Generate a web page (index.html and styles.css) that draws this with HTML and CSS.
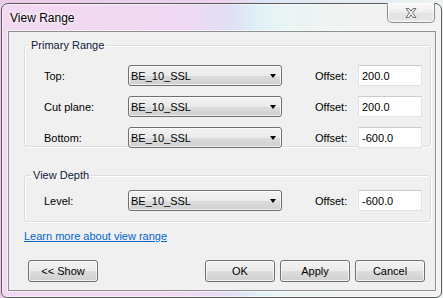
FILE: index.html
```html
<!DOCTYPE html>
<html lang="en">
<head>
    <meta charset="UTF-8">
    <meta name="viewport" content="width=device-width, initial-scale=1.0">
    <title>View Range</title>
    <link rel="stylesheet" href="styles.css">
</head>
<body>
    <div class="window">
        <div class="titlebar">
            <span class="title">View Range</span>
            <button class="close" title="Close">
                <svg width="12" height="10" viewBox="0 0 12 10">
                    <polygon points="1,0.5 4,0.5 6,3.2 8,0.5 11,0.5 7.6,5 11,9.5 8,9.5 6,6.8 4,9.5 1,9.5 4.4,5" fill="#f4f4f4" stroke="#707070" stroke-width="1" stroke-linejoin="round"/>
                </svg>
            </button>
        </div>

        <div class="client">
            <fieldset class="group primary">
                <legend>Primary Range</legend>
                <div class="rows">
                    <label>Top:</label>
                    <div class="combo"><span>BE_10_SSL</span><i class="arrow"></i></div>
                    <span></span>
                    <label>Offset:</label>
                    <input type="text" value="200.0">

                    <label>Cut plane:</label>
                    <div class="combo"><span>BE_10_SSL</span><i class="arrow"></i></div>
                    <span></span>
                    <label>Offset:</label>
                    <input type="text" value="200.0">

                    <label>Bottom:</label>
                    <div class="combo"><span>BE_10_SSL</span><i class="arrow"></i></div>
                    <span></span>
                    <label>Offset:</label>
                    <input type="text" value="-600.0">
                </div>
            </fieldset>

            <fieldset class="group depth">
                <legend>View Depth</legend>
                <div class="rows">
                    <label>Level:</label>
                    <div class="combo"><span>BE_10_SSL</span><i class="arrow"></i></div>
                    <span></span>
                    <label>Offset:</label>
                    <input type="text" value="-600.0">
                </div>
            </fieldset>

            <a class="help-link" href="#">Learn more about view range</a>

            <div class="actions">
                <button class="btn">&lt;&lt; Show</button>
                <div class="spacer"></div>
                <button class="btn">OK</button>
                <button class="btn">Apply</button>
                <button class="btn">Cancel</button>
            </div>
        </div>
    </div>
</body>
</html>
```

FILE: styles.css
```css
* {
    box-sizing: border-box;
}
body {
    margin: 0;
    width: 443px;
    height: 298px;
    overflow: hidden;
    font-family: "Liberation Sans", Arial, sans-serif;
    font-size: 11px;
    color: #000;
    background: linear-gradient(to right, #e9cbe8 0%, #ecd2ec 50%, #dde6f3 60%, #eef2f2 100%);
}
.window {
    margin: 3px 0 0 1px;
    width: 441px;
    height: 295px;
    border: 1px solid #5a5a5a;
    border-radius: 7px 7px 6px 6px;
    background: linear-gradient(to right, #f3d8f1 0%, #f0d9f3 42%, #e0def6 52%, #dff0f6 58%, #e9f5f4 64%, #f1f2f2 78%, #f2f2f2 100%);
    box-shadow: inset 0 0 0 1px rgba(255, 255, 255, 0.55);
}
.titlebar {
    display: flex;
    align-items: flex-start;
    height: 27px;
}
.title {
    margin: 7px 0 0 8px;
    font-size: 12px;
    color: #000;
    text-shadow: 0 0 6px #fff, 0 0 3px #fff;
}
.close {
    margin: -1px 6px 0 auto;
    width: 48px;
    height: 20px;
    padding: 0;
    border: 1px solid #8c8c8c;
    border-top: none;
    border-radius: 0 0 5px 5px;
    background: linear-gradient(#fbfbfb, #ececec 50%, #e2e2e2 51%, #e8e8e8);
    box-shadow: inset 0 0 0 1px rgba(255, 255, 255, 0.8);
    display: flex;
    align-items: center;
    justify-content: center;
}
.client {
    margin-left: 6px;
    width: 428px;
    height: 260px;
    border: 1px solid #8e8f8f;
    background: #f0f0f0;
    box-shadow: 0 0 0 1px rgba(255, 255, 255, 0.6);
}
.group {
    margin: 6px 0 0 15px;
    width: 407px;
    padding: 0 8px 0 19px;
    border: 1px solid #d5dfe5;
    border-radius: 3px;
    box-shadow: inset 1px 1px 0 #fff, 1px 1px 0 #fff;
}
.group legend {
    margin-left: -15px;
    padding: 0 2px;
    line-height: 14px;
    color: #10203c;
}
.rows {
    display: grid;
    grid-template-columns: 84px 154px 1fr 43px 64px;
    grid-auto-rows: 21px;
    row-gap: 10px;
    align-items: center;
}
.primary .rows {
    padding-top: 13px;
    margin-bottom: -2px;
}
.depth {
    margin-top: 21px;
}
.depth legend {
    margin-left: -13px;
}
.depth .rows {
    padding: 8px 0 10px;
}
.combo {
    height: 21px;
    display: flex;
    align-items: center;
    justify-content: space-between;
    padding: 0 5px 0 2px;
    border: 1px solid #707070;
    border-radius: 3px;
    background: linear-gradient(#f2f2f2, #ebebeb 50%, #dddddd 51%, #cfcfcf);
    box-shadow: inset 0 0 0 1px rgba(255, 255, 255, 0.7);
}
.arrow {
    width: 0;
    height: 0;
    border-left: 3.5px solid transparent;
    border-right: 3.5px solid transparent;
    border-top: 4px solid #000;
    margin-top: 1px;
}
input[type="text"] {
    height: 21px;
    width: 64px;
    padding: 0 3px;
    font: inherit;
    color: #000;
    background: #fff;
    border: 1px solid #e2e3ea;
    border-top-color: #c9ccd3;
    border-radius: 0;
    outline: none;
}
.help-link {
    display: block;
    width: max-content;
    margin: 7px 0 0 15px;
    line-height: 14px;
    color: #0066cc;
}
.actions {
    display: flex;
    gap: 5px;
    margin: 17px 10px 0 19px;
}
.spacer {
    flex: 1;
}
.btn {
    width: 70px;
    height: 22px;
    padding: 0;
    font: inherit;
    color: #000;
    border: 1px solid #707070;
    border-radius: 3px;
    background: linear-gradient(#f2f2f2, #ebebeb 50%, #dddddd 51%, #cfcfcf);
    box-shadow: inset 0 0 0 1px rgba(255, 255, 255, 0.7);
}
```
